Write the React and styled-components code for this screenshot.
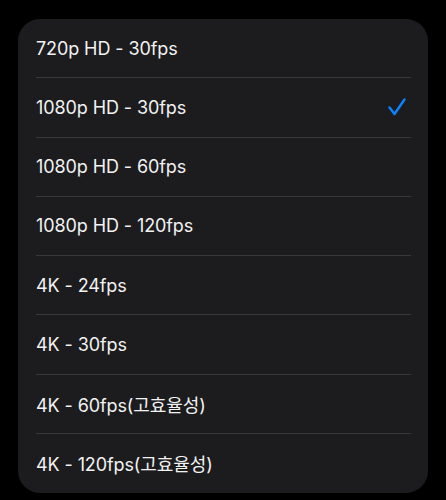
import styled, { createGlobalStyle } from "styled-components";

const Global = createGlobalStyle`
  html, body {
    margin: 0;
    padding: 0;
    background: #000;
  }
  body {
    font-family: Inter, "Noto Sans CJK KR", sans-serif;
    -webkit-font-smoothing: antialiased;
  }
`;

const Page = styled.div`
  width: 446px;
  height: 500px;
  padding: 19px 18px 0;
  box-sizing: border-box;
  background: #000;
`;

const Menu = styled.ul`
  list-style: none;
  margin: 0;
  padding: 0;
  background: #1c1c1e;
  border-radius: 22px;
  overflow: hidden;
`;

const Item = styled.li`
  height: 59.25px;
  margin-left: 18px;
  padding-right: 18px;
  box-sizing: border-box;
  display: flex;
  align-items: center;
  justify-content: space-between;
  border-bottom: ${(p) => (p.$last ? "none" : "1px solid #38383a")};
  margin-right: 17px;
  padding-right: 4px;
`;

const Label = styled.span`
  color: #f2f2f2;
  font-size: 18px;
  letter-spacing: -0.1px;
  font-family: Inter, "Noto Sans CJK KR", sans-serif;
`;

const Check = () => (
  <svg width="20" height="20" viewBox="0 0 20 20">
    <path
      d="M2.5 10.5 L7.5 17 L17.5 2.5"
      fill="none"
      stroke="#0a84ff"
      strokeWidth="2.4"
      strokeLinecap="round"
      strokeLinejoin="round"
    />
  </svg>
);

const options = [
  "720p HD - 30fps",
  "1080p HD - 30fps",
  "1080p HD - 60fps",
  "1080p HD - 120fps",
  "4K - 24fps",
  "4K - 30fps",
  "4K - 60fps(고효율성)",
  "4K - 120fps(고효율성)",
];

export default function App() {
  const selected = 1;
  return (
    <Page>
      <Global />
      <Menu>
        {options.map((o, i) => (
          <Item key={o} $last={i === options.length - 1}>
            <Label>{o}</Label>
            {i === selected && <Check />}
          </Item>
        ))}
      </Menu>
    </Page>
  );
}
